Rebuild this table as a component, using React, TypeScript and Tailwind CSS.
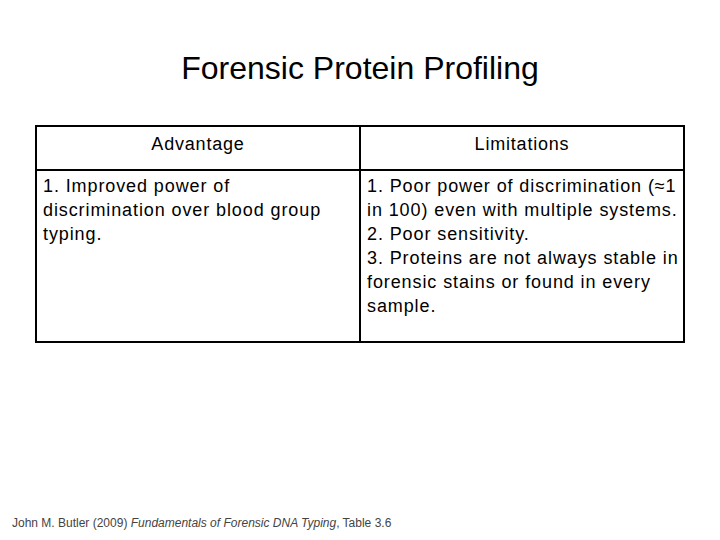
import React from "react";

export default function App() {
  const font = { fontFamily: '"Liberation Sans", Arial, sans-serif' };
  return (
    <div className="w-[720px] h-[540px] bg-white text-black flex flex-col" style={font}>
      <div className="h-[125px] flex justify-center pt-[50px]">
        <h1 className="text-[32px] leading-[36px] whitespace-nowrap">Forensic Protein Profiling</h1>
      </div>
      <div className="ml-[35px] w-[650px] border-2 border-black flex flex-col">
        <div className="flex h-[44px] border-b-2 border-black">
          <div className="w-[324px] border-r-2 border-black text-center text-[18px] tracking-[0.8px] leading-[24px] pt-[5px]">
            Advantage
          </div>
          <div className="flex-1 text-center text-[18px] tracking-[0.8px] leading-[24px] pt-[5px]">
            Limitations
          </div>
        </div>
        <div className="flex h-[170px]">
          <div className="w-[324px] border-r-2 border-black text-[18px] tracking-[0.9px] leading-[24px] pt-[3px] pl-[6px] whitespace-nowrap">
            1. Improved power of
            <br />
            discrimination over blood group
            <br />
            typing.
          </div>
          <div className="flex-1 text-[18px] tracking-[0.9px] leading-[24px] pt-[3px] pl-[6px] whitespace-nowrap">
            1. Poor power of discrimination (≈1
            <br />
            in 100) even with multiple systems.
            <br />
            2. Poor sensitivity.
            <br />
            3. Proteins are not always stable in
            <br />
            forensic stains or found in every
            <br />
            sample.
          </div>
        </div>
      </div>
      <div className="mt-auto h-[34px] pl-[12px] text-[12px] leading-[14px] text-[#444] whitespace-nowrap pt-[10px]">
        John M. Butler (2009) <i>Fundamentals of Forensic DNA Typing</i>, Table 3.6
      </div>
    </div>
  );
}
